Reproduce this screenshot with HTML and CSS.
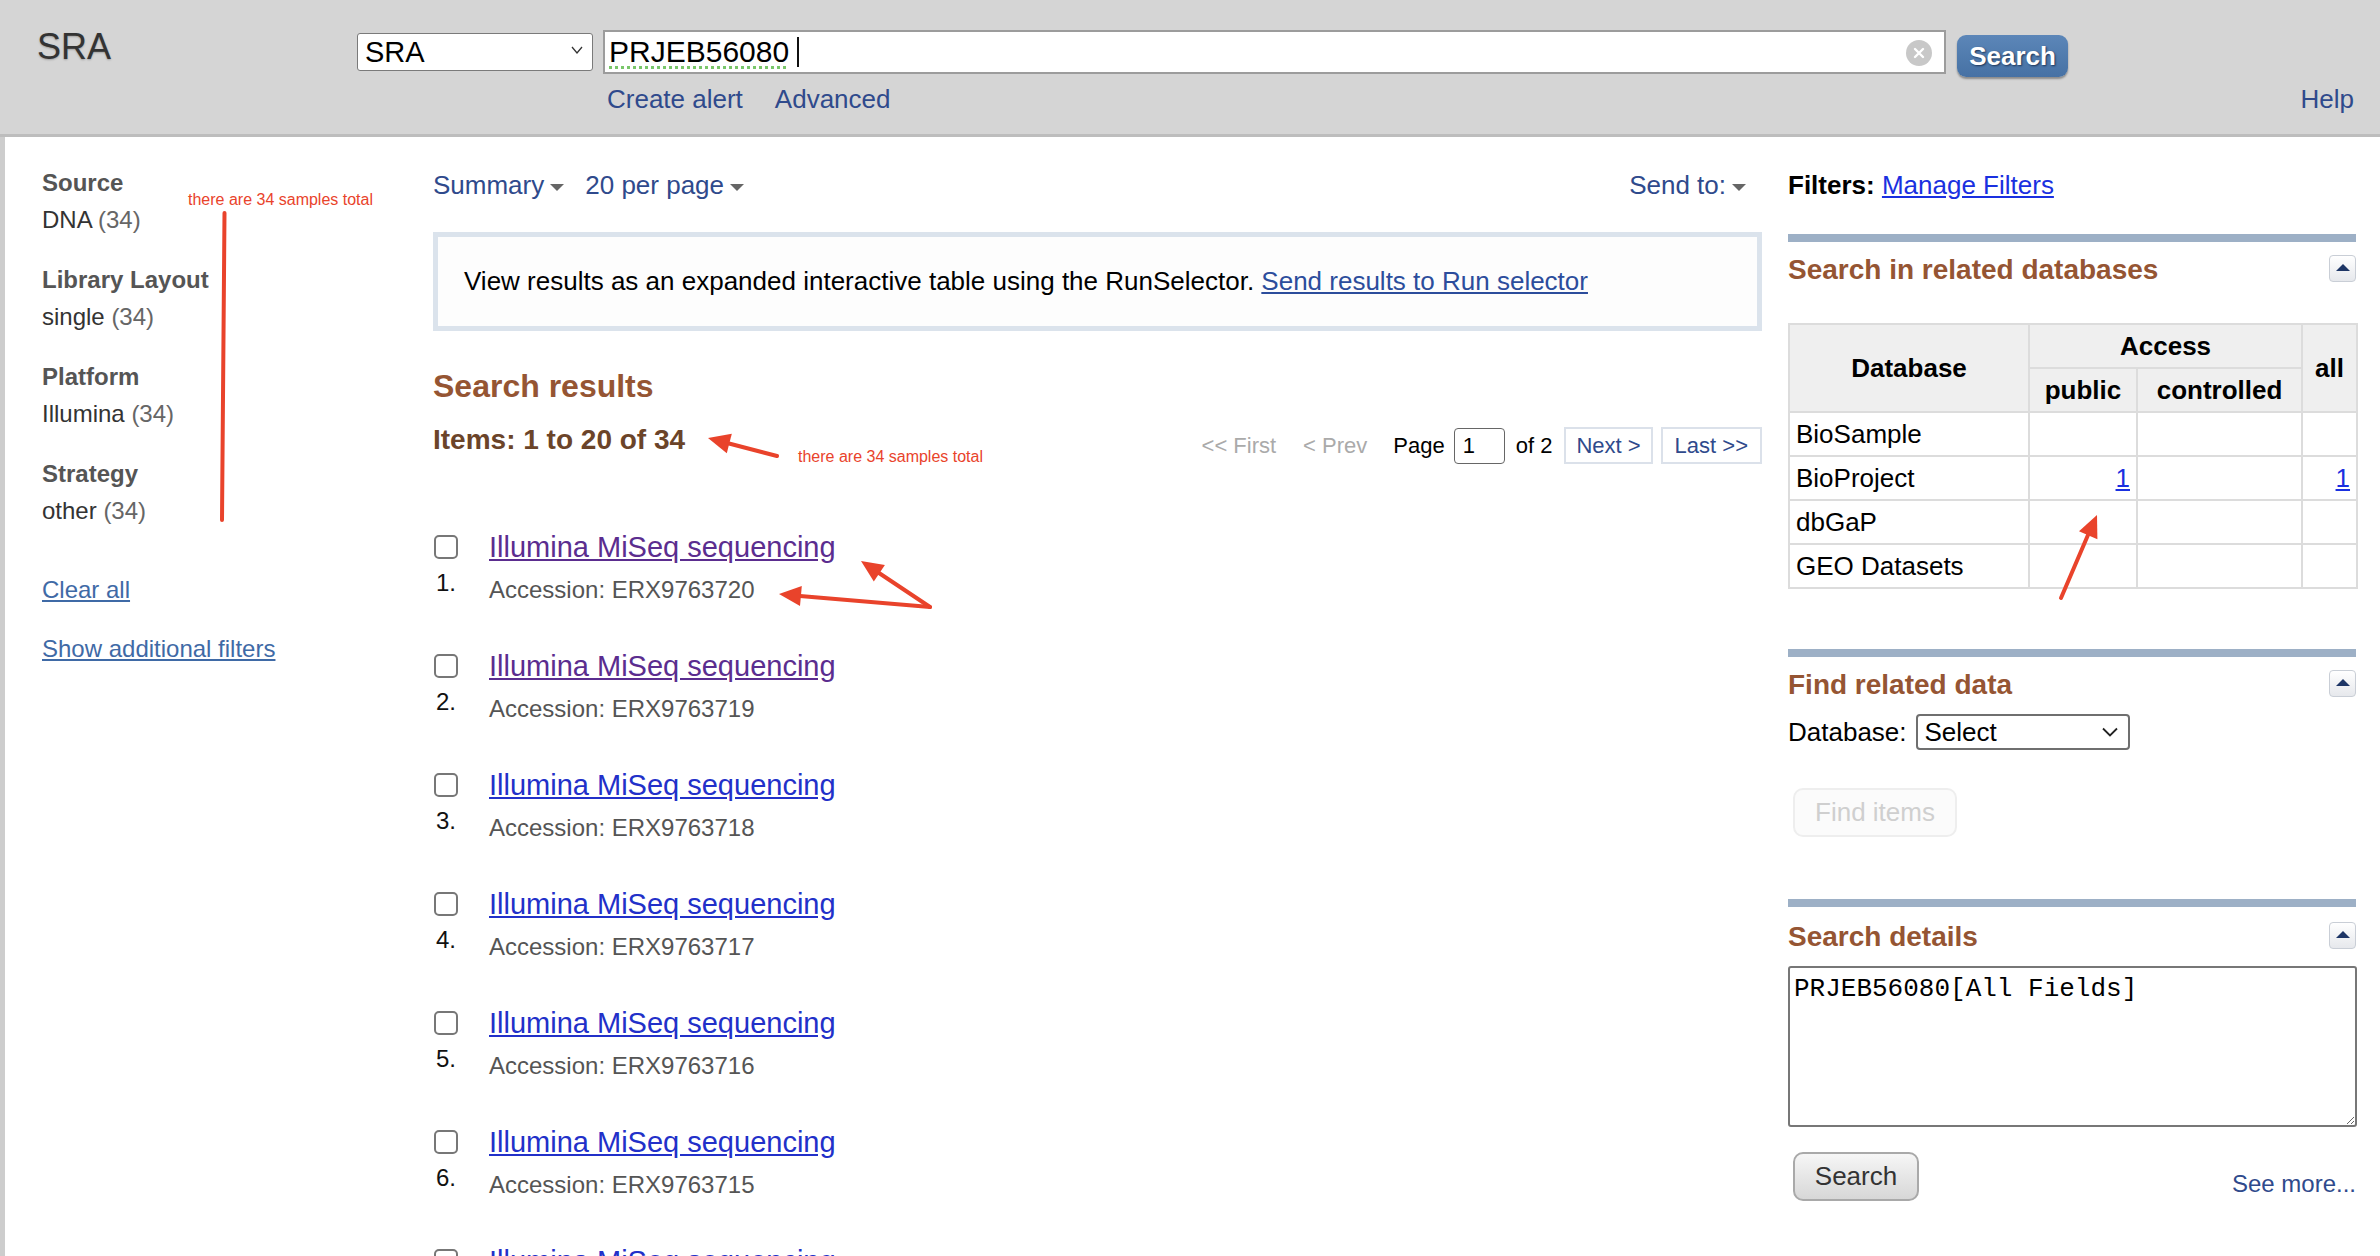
FILE: index.html
```html
<!DOCTYPE html>
<html lang="en">
<head>
<meta charset="utf-8">
<title>PRJEB56080 - SRA - NCBI</title>
<link rel="stylesheet" href="styles.css">
</head>
<body>
<header class="hdr">
  <div class="logo">SRA</div>
  <div class="search">
    <div class="search-row">
      <div class="db-select"><span>SRA</span>
        <svg class="chev-sm" width="12" height="8" viewBox="0 0 12 8"><path d="M1 1 L6 7 L11 1" fill="none" stroke="#333" stroke-width="1.3"/></svg>
      </div>
      <div class="term"><span class="term-text">PRJEB56080</span><span class="caret"></span>
        <span class="clear"><svg width="26" height="26" viewBox="0 0 26 26"><circle cx="13" cy="13" r="13" fill="#c8c8c8"/><path d="M9 9 L17 17 M17 9 L9 17" stroke="#fff" stroke-width="2.4" stroke-linecap="round"/></svg></span>
      </div>
      <button class="go">Search</button>
    </div>
    <div class="search-links"><a class="hlink">Create alert</a><a class="hlink">Advanced</a></div>
  </div>
  <div class="help"><a class="hlink">Help</a></div>
</header>

<div class="page">
  <aside class="facets">
    <div class="facet"><div class="facet-title">Source</div><div class="facet-item">DNA <span class="cnt">(34)</span></div></div>
    <div class="facet"><div class="facet-title">Library Layout</div><div class="facet-item">single <span class="cnt">(34)</span></div></div>
    <div class="facet"><div class="facet-title">Platform</div><div class="facet-item">Illumina <span class="cnt">(34)</span></div></div>
    <div class="facet"><div class="facet-title">Strategy</div><div class="facet-item">other <span class="cnt">(34)</span></div></div>
    <div class="facet-link first"><a>Clear all</a></div>
    <div class="facet-link"><a>Show additional filters</a></div>
  </aside>

  <main class="results">
    <div class="toolbar">
      <span class="dd">Summary<i class="tri"></i></span>
      <span class="dd">20 per page<i class="tri"></i></span>
      <span class="dd sendto">Send to:<i class="tri"></i></span>
    </div>
    <div class="infobox">View results as an expanded interactive table using the RunSelector. <a class="runsel">Send results to Run selector</a></div>
    <h2 class="sr-title">Search results</h2>
    <div class="count-row">
      <div class="items">Items: 1 to 20 of 34</div>
      <div class="pager">
        <span class="pg-off">&lt;&lt; First</span>
        <span class="pg-off prev">&lt; Prev</span>
        <span class="pg-lbl">Page</span>
        <span class="pg-input">1</span>
        <span class="pg-of">of 2</span>
        <span class="pg-btn">Next &gt;</span>
        <span class="pg-btn last">Last &gt;&gt;</span>
      </div>
    </div>
    <div class="result-list">
      <div class="result"><input type="checkbox" class="cb"><a class="rtitle visited">Illumina MiSeq sequencing</a><span class="num">1.</span><span class="acc">Accession: ERX9763720</span></div>
      <div class="result"><input type="checkbox" class="cb"><a class="rtitle visited">Illumina MiSeq sequencing</a><span class="num">2.</span><span class="acc">Accession: ERX9763719</span></div>
      <div class="result"><input type="checkbox" class="cb"><a class="rtitle">Illumina MiSeq sequencing</a><span class="num">3.</span><span class="acc">Accession: ERX9763718</span></div>
      <div class="result"><input type="checkbox" class="cb"><a class="rtitle">Illumina MiSeq sequencing</a><span class="num">4.</span><span class="acc">Accession: ERX9763717</span></div>
      <div class="result"><input type="checkbox" class="cb"><a class="rtitle">Illumina MiSeq sequencing</a><span class="num">5.</span><span class="acc">Accession: ERX9763716</span></div>
      <div class="result"><input type="checkbox" class="cb"><a class="rtitle">Illumina MiSeq sequencing</a><span class="num">6.</span><span class="acc">Accession: ERX9763715</span></div>
      <div class="result"><input type="checkbox" class="cb"><a class="rtitle">Illumina MiSeq sequencing</a><span class="num">7.</span><span class="acc">Accession: ERX9763714</span></div>
    </div>
  </main>

  <aside class="side">
    <div class="filters"><b>Filters:</b> <a class="blue">Manage Filters</a></div>

    <div class="portlet-bar"></div>
    <div class="portlet-head"><span class="portlet-title">Search in related databases</span><span class="collapse"><i></i></span></div>
    <table class="rel-table">
      <colgroup><col class="c-db"><col class="c-pub"><col class="c-ctl"><col class="c-all"></colgroup>
      <tr><th rowspan="2">Database</th><th colspan="2">Access</th><th rowspan="2">all</th></tr>
      <tr><th>public</th><th>controlled</th></tr>
      <tr><td>BioSample</td><td></td><td></td><td></td></tr>
      <tr><td>BioProject</td><td class="r"><a class="blue">1</a></td><td></td><td class="r"><a class="blue">1</a></td></tr>
      <tr><td>dbGaP</td><td></td><td></td><td></td></tr>
      <tr><td>GEO Datasets</td><td></td><td></td><td></td></tr>
    </table>

    <div class="portlet-bar second"></div>
    <div class="portlet-head"><span class="portlet-title">Find related data</span><span class="collapse"><i></i></span></div>
    <div class="db-row"><span>Database:</span>
      <div class="sel"><span>Select</span><svg width="16" height="10" viewBox="0 0 16 10"><path d="M1 1.5 L8 8.5 L15 1.5" fill="none" stroke="#222" stroke-width="1.8"/></svg></div>
    </div>
    <div class="find-btn">Find items</div>

    <div class="portlet-bar third"></div>
    <div class="portlet-head"><span class="portlet-title">Search details</span><span class="collapse"><i></i></span></div>
    <textarea class="details">PRJEB56080[All Fields]</textarea>
    <div class="details-foot"><span class="gray-btn">Search</span><a class="hlink seemore">See more...</a></div>
  </aside>
</div>

<svg class="annot" width="2380" height="1256" viewBox="0 0 2380 1256">
  <g fill="#e9432b" stroke="#e9432b" stroke-width="4" stroke-linecap="round">
    <line x1="224.5" y1="213" x2="222" y2="520"/>
    <line x1="777" y1="456" x2="729" y2="443.5"/>
    <polygon stroke="none" points="708,438 731.8,433.8 726.8,453.2"/>
    <line x1="930" y1="607" x2="879" y2="573"/>
    <polygon stroke="none" points="861,561 884.9,564.9 873.8,581.5"/>
    <line x1="930" y1="607" x2="800" y2="596"/>
    <polygon stroke="none" points="779,594 801.8,585.9 800,605.9"/>
    <line x1="2061" y1="598" x2="2088" y2="535"/>
    <polygon stroke="none" points="2097,515 2097.4,539.2 2079,531.2"/>
  </g>
</svg>
<span class="note note-a">there are 34 samples total</span>
<span class="note note-b">there are 34 samples total</span>
</body>
</html>
```
FILE: styles.css
```css
html, body {
  margin: 0;
  padding: 0;
  overflow: hidden;
}
body {
  position: relative;
  width: 2380px;
  height: 1256px;
  background: #fff;
  font-family: "Liberation Sans", Arial, Helvetica, sans-serif;
  color: #000;
}
a { cursor: pointer; }

/* ---------- header ---------- */
.hdr {
  display: grid;
  grid-template-columns: 357px 1711px 1fr;
  height: 134px;
  background: #d5d5d5;
  border-bottom: 3px solid #bdbdbd;
  box-sizing: content-box;
}
.logo {
  padding: 27px 0 0 37px;
  font-size: 36px;
  line-height: 40px;
  color: #333;
  text-shadow: 0 1px 2px rgba(0,0,0,0.25);
}
.search { padding-top: 30px; }
.search-row { display: flex; align-items: flex-start; }
.db-select {
  width: 236px;
  height: 38px;
  margin-top: 3px;
  box-sizing: border-box;
  border: 1px solid #7a7a7a;
  border-radius: 3px;
  background: #fff;
  display: flex;
  align-items: center;
  justify-content: space-between;
  padding: 0 9px 0 7px;
  font-size: 29px;
  color: #000;
}
.chev-sm { margin-top: -4px; }
.term {
  margin-left: 10px;
  width: 1343px;
  height: 44px;
  box-sizing: border-box;
  border: 2px solid #9c9c9c;
  background: #fff;
  display: flex;
  align-items: center;
  padding-left: 4px;
  font-size: 30px;
}
.term-text {
  text-decoration: underline dotted #79c66a;
  text-decoration-thickness: 3px;
  text-underline-offset: 4px;
}
.caret {
  display: inline-block;
  width: 2px;
  height: 30px;
  background: #111;
  margin-left: 8px;
}
.clear { margin-left: auto; margin-right: 12px; height: 26px; }
.go {
  margin-left: 11px;
  margin-top: 5px;
  width: 111px;
  height: 42px;
  border: none;
  border-radius: 9px;
  background: linear-gradient(#5c86b8, #4671a4);
  color: #fff;
  font-family: "Liberation Sans", Arial, sans-serif;
  font-weight: bold;
  font-size: 26px;
  text-shadow: 1px 1px 2px #1c3456;
  box-shadow: 0 2px 2px rgba(0,0,0,0.35);
  padding: 0;
}
.search-links {
  margin-top: 7px;
  padding-left: 250px;
  font-size: 26px;
  line-height: 30px;
}
.hlink { color: #2f4a8c; text-decoration: none; }
.search-links .hlink { margin-right: 32px; }
.help {
  text-align: right;
  padding: 84px 26px 0 0;
  font-size: 26px;
  line-height: 30px;
}

/* ---------- page ---------- */
.page {
  display: flex;
  align-items: flex-start;
  border-left: 5px solid #cdcdcd;
  height: 1119px;
}

/* facets */
.facets {
  flex: none;
  width: 428px;
  box-sizing: border-box;
  padding: 27px 0 0 37px;
  font-size: 24px;
}
.facet { margin-bottom: 23px; }
.facet-title { font-weight: bold; color: #555; line-height: 37px; }
.facet-item { color: #333; line-height: 37px; }
.cnt { color: #666; }
.facet-link { line-height: 37px; margin-bottom: 22px; }
.facet-link.first { margin-top: 42px; }
.facet-link a { color: #3f6aa6; text-decoration: underline; }

/* results */
.results {
  flex: none;
  width: 1329px;
  padding-top: 32px;
}
.toolbar {
  display: flex;
  font-size: 26px;
  line-height: 32px;
  color: #2f4a8c;
}
.dd { margin-right: 21px; display: flex; align-items: center; }
.tri {
  display: inline-block;
  width: 0;
  height: 0;
  margin-left: 6px;
  margin-top: 4px;
  border-left: 7px solid transparent;
  border-right: 7px solid transparent;
  border-top: 7px solid #666;
}
.sendto { margin-left: auto; margin-right: 16px; }
.infobox {
  margin-top: 31px;
  border: 5px solid #dbe3ec;
  padding: 28px 26px;
  font-size: 26px;
  line-height: 33px;
  background: #fdfdfd;
}
.runsel { color: #2c4d9c; text-decoration: underline; }
.sr-title {
  margin: 35px 0 0;
  font-size: 32px;
  line-height: 40px;
  font-weight: bold;
  color: #955533;
}
.count-row { display: flex; align-items: flex-start; margin-top: 14px; }
.items {
  font-size: 28px;
  line-height: 40px;
  font-weight: bold;
  color: #6b4429;
}
.pager {
  margin-left: auto;
  margin-top: 7px;
  display: flex;
  align-items: center;
  height: 37px;
  font-size: 22px;
}
.pg-off { color: #aaa; }
.pg-off.prev { margin-left: 27px; }
.pg-lbl { margin-left: 26px; }
.pg-input {
  margin-left: 9px;
  width: 51px;
  height: 36px;
  box-sizing: border-box;
  border: 1px solid #666;
  border-radius: 4px;
  padding-left: 8px;
  line-height: 34px;
}
.pg-of { margin-left: 11px; }
.pg-btn {
  margin-left: 12px;
  height: 37px;
  box-sizing: border-box;
  border: 2px solid #dbe1ea;
  padding: 0 10px;
  line-height: 33px;
  color: #2f4a8c;
}
.pg-btn.last { margin-left: 8px; padding: 0 12px; }

.result-list { margin-top: 65px; }
.result {
  display: grid;
  grid-template-columns: 56px 1fr;
  margin-bottom: 33px;
}
.cb {
  appearance: none;
  -webkit-appearance: none;
  width: 24px;
  height: 24px;
  margin: 6px 0 0 1px;
  box-sizing: border-box;
  border: 2px solid #777;
  border-radius: 5px;
  background: #fff;
}
.rtitle {
  font-size: 29px;
  line-height: 36px;
  color: #2230c9;
  text-decoration: underline;
  text-underline-offset: 2px;
}
.rtitle.visited { color: #5b2d8f; }
.num {
  font-size: 24px;
  line-height: 36px;
  margin-left: 3px;
  color: #111;
}
.acc {
  font-size: 24px;
  line-height: 50px;
  color: #555;
}

/* side column */
.side {
  flex: none;
  width: 568px;
  margin-left: 26px;
  padding-top: 32px;
}
.filters { font-size: 26px; line-height: 32px; }
.blue { color: #1a30e0; text-decoration: underline; }
.portlet-bar { height: 8px; background: #9db0c6; margin-top: 33px; }
.portlet-bar.second { margin-top: 60px; }
.portlet-bar.third { margin-top: 62px; }
.portlet-head {
  display: flex;
  justify-content: space-between;
  align-items: flex-start;
  margin-top: 10px;
}
.portlet-bar.third + .portlet-head { margin-top: 12px; }
.portlet-title {
  font-size: 28px;
  line-height: 36px;
  font-weight: bold;
  color: #955533;
}
.collapse {
  width: 27px;
  height: 27px;
  margin-top: 3px;
  box-sizing: border-box;
  border: 1px solid #c9ced6;
  border-radius: 4px;
  background: linear-gradient(#ffffff, #e6e8ec);
  display: flex;
  align-items: center;
  justify-content: center;
}
.collapse i {
  width: 0;
  height: 0;
  border-left: 7px solid transparent;
  border-right: 7px solid transparent;
  border-bottom: 7px solid #1e3666;
  margin-top: -2px;
}
.rel-table {
  margin-top: 35px;
  width: 568px;
  border-collapse: collapse;
  font-size: 26px;
  table-layout: fixed;
}
.c-db { width: 240px; }
.c-pub { width: 108px; }
.c-ctl { width: 165px; }
.c-all { width: 55px; }
.rel-table th, .rel-table td {
  border: 2px solid #dcdcdc;
  height: 42px;
  padding: 0 6px;
}
.rel-table th { background: #efefef; font-weight: bold; text-align: center; }
.rel-table td { text-align: left; }
.rel-table td.r { text-align: right; }

.db-row {
  display: flex;
  align-items: center;
  margin-top: 11px;
  height: 36px;
  font-size: 26px;
}
.sel {
  margin-left: 9px;
  width: 214px;
  height: 36px;
  box-sizing: border-box;
  border: 2px solid #6f6f6f;
  border-radius: 4px;
  display: flex;
  align-items: center;
  justify-content: space-between;
  padding: 0 10px 0 7px;
}
.find-btn {
  margin: 38px 0 0 5px;
  width: 164px;
  height: 49px;
  box-sizing: border-box;
  border: 2px solid #eeeeee;
  border-radius: 10px;
  background: #fbfbfb;
  color: #cfcfcf;
  font-size: 26px;
  line-height: 45px;
  text-align: center;
}
.details {
  display: block;
  margin-top: 11px;
  width: 569px;
  height: 161px;
  box-sizing: border-box;
  border: 2px solid #777;
  border-radius: 3px;
  padding: 6px 4px 4px;
  font-family: "Liberation Mono", "Courier New", monospace;
  font-size: 26px;
  line-height: 30px;
  color: #000;
  resize: both;
}
.details-foot {
  display: flex;
  justify-content: space-between;
  align-items: flex-end;
  margin-top: 25px;
}
.gray-btn {
  margin-left: 5px;
  width: 126px;
  height: 49px;
  box-sizing: border-box;
  border: 2px solid #a9a9a9;
  border-radius: 10px;
  background: linear-gradient(#f6f6f6, #d7d7d7);
  color: #333;
  font-size: 26px;
  line-height: 45px;
  text-align: center;
}
.seemore { font-size: 24px; line-height: 30px; margin-bottom: 2px; }

/* annotations drawn over the screenshot */
.annot {
  position: absolute;
  left: 0;
  top: 0;
  pointer-events: none;
}
.note {
  position: absolute;
  font-size: 16px;
  line-height: 18px;
  color: #e9432b;
  white-space: nowrap;
}
.note-a { left: 188px; top: 191px; }
.note-b { left: 798px; top: 448px; }
```
